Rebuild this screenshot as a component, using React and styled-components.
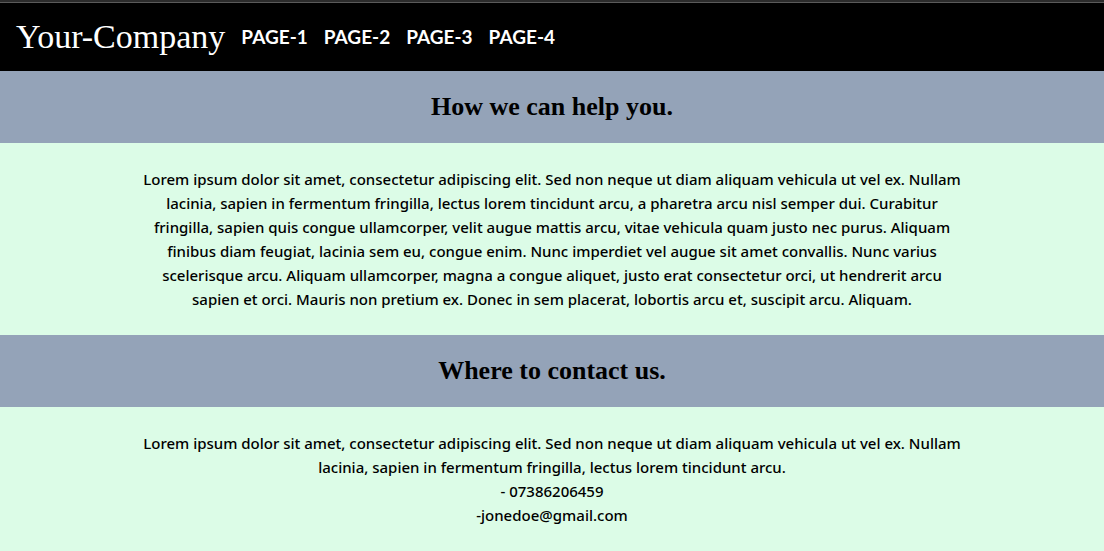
import React from "react";
import styled, { createGlobalStyle } from "styled-components";

const GlobalStyle = createGlobalStyle`
  *, *::before, *::after { box-sizing: border-box; }
  body {
    margin: 0;
    background: #dcfce7;
    color: #000;
    font: 500 15px/24px "Noto Sans", sans-serif;
  }
  h1, h2, p, ul { margin: 0; padding: 0; }
`;

const Header = styled.header`
  display: flex;
  align-items: center;
  gap: 16px;
  padding: 15px 16px 14px;
  background: #000;
  border-top: 2px solid #2b2b2b;
  box-shadow: inset 0 1px #5a5a5a;
  color: #fff;
`;

const Brand = styled.h1`
  font: 400 34px/40px "Liberation Serif", serif;
`;

const NavList = styled.ul`
  display: flex;
  gap: 16px;
  list-style: none;
`;

const NavLink = styled.a`
  color: inherit;
  font: 700 19px/28px Lato, sans-serif;
  text-decoration: none;
`;

const SectionTitle = styled.h2`
  padding: 18px 24px;
  background: #94a3b8;
  font: 700 26px/36px "Liberation Serif", serif;
  text-align: center;
`;

const SectionBody = styled.div`
  width: 75%;
  margin: 0 auto;
  padding: 24px 0;
  text-align: center;
`;

const pages = ["PAGE-1", "PAGE-2", "PAGE-3", "PAGE-4"];

export default function App() {
  return (
    <>
      <GlobalStyle />
      <Header>
        <Brand>Your-Company</Brand>
        <nav>
          <NavList>
            {pages.map((page) => (
              <li key={page}>
                <NavLink href={`#${page.toLowerCase()}`}>{page}</NavLink>
              </li>
            ))}
          </NavList>
        </nav>
      </Header>
      <main>
        <section>
          <SectionTitle>How we can help you.</SectionTitle>
          <SectionBody>
            <p>
              Lorem ipsum dolor sit amet, consectetur adipiscing elit. Sed non neque ut diam aliquam vehicula ut vel ex. Nullam
              lacinia, sapien in fermentum fringilla, lectus lorem tincidunt arcu, a pharetra arcu nisl semper dui. Curabitur
              fringilla, sapien quis congue ullamcorper, velit augue mattis arcu, vitae vehicula quam justo nec purus. Aliquam
              finibus diam feugiat, lacinia sem eu, congue enim. Nunc imperdiet vel augue sit amet convallis. Nunc varius
              scelerisque arcu. Aliquam ullamcorper, magna a congue aliquet, justo erat consectetur orci, ut hendrerit arcu
              sapien et orci. Mauris non pretium ex. Donec in sem placerat, lobortis arcu et, suscipit arcu. Aliquam.
            </p>
          </SectionBody>
        </section>
        <section>
          <SectionTitle>Where to contact us.</SectionTitle>
          <SectionBody>
            <p>
              Lorem ipsum dolor sit amet, consectetur adipiscing elit. Sed non neque ut diam aliquam vehicula ut vel ex. Nullam
              lacinia, sapien in fermentum fringilla, lectus lorem tincidunt arcu.
            </p>
            <p>- 07386206459</p>
            <p>-jonedoe@gmail.com</p>
          </SectionBody>
        </section>
      </main>
    </>
  );
}
